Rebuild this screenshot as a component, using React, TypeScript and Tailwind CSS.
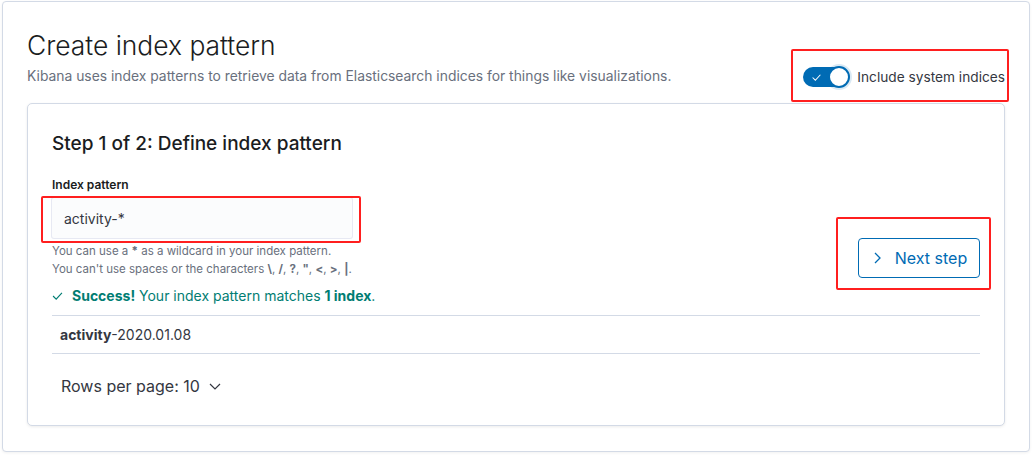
import React from 'react';

const font = { fontFamily: 'Inter, "Noto Sans", sans-serif' };

function Check({ className }: { className?: string }) {
  return (
    <svg viewBox="0 0 12 9" className={className} fill="none" stroke="currentColor" strokeWidth="1.3">
      <path d="M1 4.5l3.5 3.5L11 1" />
    </svg>
  );
}

function Toggle() {
  return (
    <div className="relative h-[20px] w-[46px] rounded-full bg-[#006bb4]">
      <Check className="absolute left-[8px] top-[7px] h-[7px] w-[11px] text-white" />
      <span className="absolute right-[-1px] top-[-1px] h-[22px] w-[22px] rounded-full border-2 border-[#006bb4] bg-white shadow-[0_0_0_2px_rgba(0,107,180,0.15)]" />
    </div>
  );
}

function RedBox({ className }: { className: string }) {
  return <div className={`pointer-events-none absolute border-2 border-[#ff1f1f] rounded-[2px] ${className}`} />;
}

export default function App() {
  return (
    <div className="relative h-[455px] w-[1036px] overflow-hidden bg-white" style={font}>
      <div className="ml-[2px] mt-[1px] h-[451px] w-[1028px] rounded-[4px] border border-[#d3dae6] bg-white px-[24px] pt-[27px] shadow-[0_1px_3px_rgba(0,0,0,0.06)]">
        <div className="flex items-end justify-between">
          <div>
            <h1 className="text-[26.4px] font-light leading-[32px] text-[#1a1c21]">Create index pattern</h1>
            <p className="mt-[5px] text-[13.86px] leading-[20px] text-[#69707d]">
              Kibana uses index patterns to retrieve data from Elasticsearch indices for things like visualizations.
            </p>
          </div>
          <div className="mb-[-1px] flex items-center gap-[8px]">
            <Toggle />
            <span className="text-[13.7px] leading-[20px] text-[#343741]">Include system indices</span>
          </div>
        </div>

        <div className="mt-[17px] h-[323px] rounded-[5px] border border-[#d3dae6] bg-white px-[24px] pt-[28px] shadow-[0_1px_3px_rgba(0,0,0,0.08)]">
          <h2 className="text-[19px] font-medium leading-[24px] text-[#1a1c21]">Step 1 of 2: Define index pattern</h2>

          <div className="mt-[20px] flex justify-between">
            <div className="w-[300px]">
              <label className="block text-[12px] font-semibold leading-[18px] text-[#1a1c21]">Index pattern</label>
              <div className="mt-[4px] flex h-[40px] items-center rounded-[2px] bg-[#fbfcfd] px-[12px] text-[14px] text-[#343741] shadow-[0_0_0_1px_rgba(17,43,134,0.1)]">
                activity-*
              </div>
              <div className="mt-[4px] text-[11.5px] leading-[18px] text-[#69707d]">
                <div>You can use a <strong>*</strong> as a wildcard in your index pattern.</div>
                <div className="whitespace-nowrap">
                  You can't use spaces or the characters <strong>\</strong>, <strong>/</strong>, <strong>?</strong>,{' '}
                  <strong>"</strong>, <strong>&lt;</strong>, <strong>&gt;</strong>, <strong>|</strong>.
                </div>
              </div>
            </div>
            <button className="mt-[62px] flex h-[40px] w-[122px] items-center justify-center gap-[14px] rounded-[4px] border border-[#006bb4] bg-white pl-[3px] text-[16px] text-[#006bb4]">
              <svg viewBox="0 0 7 12" className="h-[12px] w-[7px]" fill="none" stroke="currentColor" strokeWidth="1.3">
                <path d="M1 1l5 5-5 5" />
              </svg>
              Next step
            </button>
          </div>

          <div className="mt-[8px] flex items-center gap-[9px] text-[14px] leading-[20px] text-[#017d73]">
            <Check className="h-[8px] w-[11px]" />
            <span>
              <strong>Success!</strong> Your index pattern matches <strong>1 index</strong>.
            </span>
          </div>

          <div className="mt-[9px] border-t border-[#d3dae6]">
            <div className="flex h-[38px] items-center border-b border-[#d3dae6] px-[8px] text-[14px] text-[#343741]">
              <strong>activity</strong>-2020.01.08
            </div>
          </div>

          <div className="mt-[20px] flex items-center gap-[9px] px-[9px] text-[16px] leading-[24px] text-[#343741]">
            <span>Rows per page: 10</span>
            <svg viewBox="0 0 12 7" className="h-[7px] w-[12px]" fill="none" stroke="currentColor" strokeWidth="1.2">
              <path d="M1 1l5 5 5-5" />
            </svg>
          </div>
        </div>
      </div>

      <RedBox className="left-[791px] top-[49px] h-[53px] w-[218px]" />
      <RedBox className="left-[41px] top-[196px] h-[47px] w-[320px]" />
      <RedBox className="left-[836px] top-[217px] h-[73px] w-[155px]" />
    </div>
  );
}
